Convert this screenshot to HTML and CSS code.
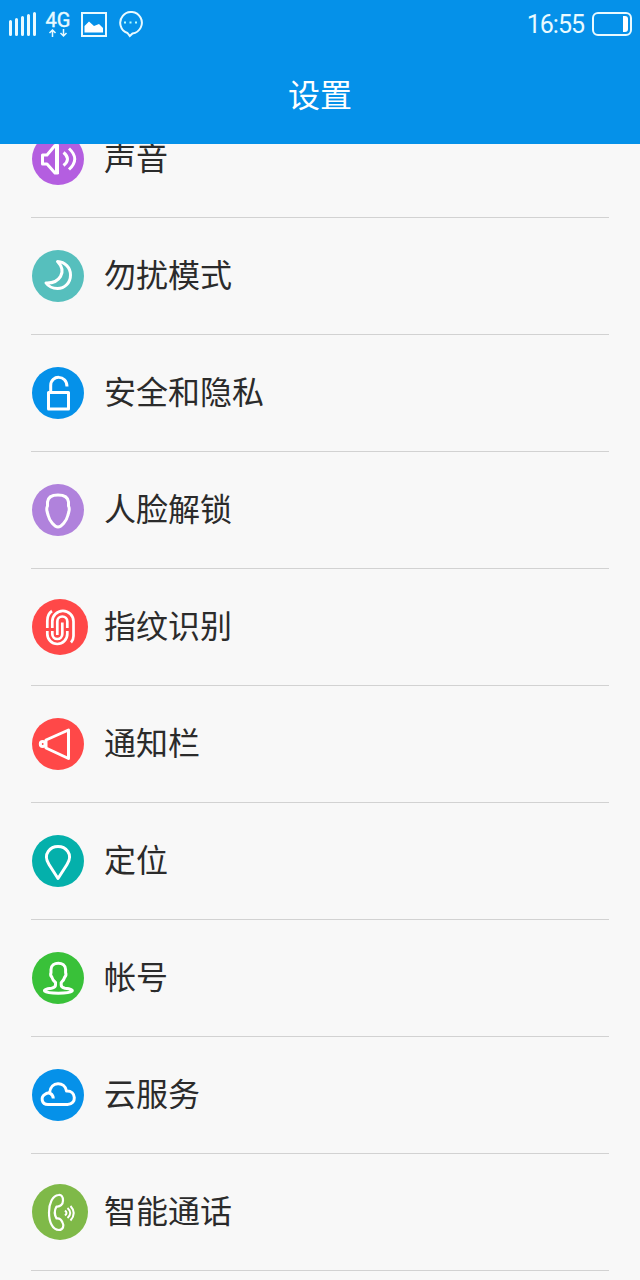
FILE: index.html
```
<!DOCTYPE html>
<html lang="zh-CN">
<head>
<meta charset="utf-8">
<title>设置</title>
<link rel="stylesheet" href="styles.css">
</head>
<body>
<div class="screen">
<header class="header">
  <div class="status">
    <svg class="signal" width="28" height="26" viewBox="0 0 28 26"><path d="M1.500 10.500V23.500M7.500 8.500V23.500M13.500 6.500V23.500M19.500 4.500V23.500M25.500 2.500V23.500"/></svg>
    <div class="network"><span>4G</span><svg width="20" height="9" viewBox="0 0 20 9"><path d="M4.500 8V1M1.500 4L4.500 1L7.500 4M15.500 0V7M12.500 4L15.500 7L18.500 4"/></svg></div>
    <svg class="photo" width="26" height="25" viewBox="0 0 26 25"><rect x="1" y="1" width="24" height="23"/><path d="M3.500 20.500V14L8 9.500L13 14L18 12L22 16V20.500Z"/></svg>
    <svg class="chat" width="24" height="27" viewBox="0 0 24 27"><path d="M8.500 22A10.800 10.800 0 1 1 13.500 22.500L10.800 25Z"/><path class="dots" d="M5 11.500H7M10.500 11.500H12.500M16 11.500H18"/></svg>
    <span class="time">16:55</span>
    <svg class="battery" width="40" height="24" viewBox="0 0 40 24"><rect x="1" y="1" width="38" height="22" rx="5"/><path d="M31 4H33Q36 4 36 7V17Q36 20 33 20H31Z"/></svg>
  </div>
  <h1 class="title">设置</h1>
</header>
<main class="viewport">
<ul class="list">
  <li class="row"><svg class="icon purple" viewBox="0 0 52 52"><path d="M10.500 22H15L23 12.500H25.500V40H23L15 31H10.500Z"/><path d="M25 11.500V41" stroke-width="4"/><path d="M31.500 19.500Q39.500 26 31.500 32.500M37 15.500Q48.500 26 37 36.500"/></svg><span class="label">声音</span></li>
  <li class="row"><svg class="icon teal" viewBox="0 0 52 52"><path d="M25.500 11.500C33 12 38.500 17.500 38.500 25C38.500 33 32.500 38.500 25.500 38.500C20.500 38.500 16.500 36.500 14 33C27.500 33.500 35.500 22 25.500 11.500Z"/></svg><span class="label">勿扰模式</span></li>
  <li class="row"><svg class="icon blue" viewBox="0 0 52 52"><path d="M16.500 25.500H36.500V42H16.500ZM18.700 25V18.500C18.700 7.500 35 7.500 35 19.500"/></svg><span class="label">安全和隐私</span></li>
  <li class="row"><svg class="icon lilac" viewBox="0 0 52 52"><path d="M26 11C31.500 11 36 13 36.500 18L36.500 22Q37.800 24 36.800 28L35.800 31.500C34.500 37 29.500 43 26 43S17.500 37 16.200 31.500L15.200 28Q14.200 24 15.500 22L15.500 18C16 13 20.500 11 26 11Z"/></svg><span class="label">人脸解锁</span></li>
  <li class="row"><svg class="icon wide red" viewBox="0 0 56 56"><path d="M20 12Q15.300 15 15.300 22V29M15.300 32V35A10 10 0 0 0 35.300 35V32M20.300 29V22.500A10.600 10.600 0 0 1 41.500 22.500V37Q41.500 41 39 43.500M20.300 32V35A5 5 0 0 0 30.300 35V23.500M25.300 36V22.500A5 5 0 0 1 35.300 22.500V29"/></svg><span class="label">指纹识别</span></li>
  <li class="row"><svg class="icon red" viewBox="0 0 52 52"><path d="M14 22L36.500 12V40.500L14 30Z"/><circle cx="10.700" cy="26" r="2.400"/></svg><span class="label">通知栏</span></li>
  <li class="row"><svg class="icon jade" viewBox="0 0 52 52"><path d="M26 43.500L17 29.500C10 18.500 19 11.500 26 11.500S42 18.500 35 29.500Z"/></svg><span class="label">定位</span></li>
  <li class="row"><svg class="icon green" viewBox="0 0 52 52"><path d="M23.500 33V30.500Q20.500 28 19.800 25Q18 23.500 19 20.500V17.500C19 9 33.600 9 33.600 17.500V20.500Q34.600 23.500 32.800 25Q32 28 29.200 30.500V33Q29.200 35.500 33 36.200C45 37.500 42 41.200 26.300 41.200S8 37.500 19.500 36.200Q23.500 35.500 23.500 33Z"/></svg><span class="label">帐号</span></li>
  <li class="row"><svg class="icon blue" viewBox="0 0 52 52"><path d="M21.300 29.500C21 25 17 22.500 13.500 25C8 28 9.500 35.500 16 35.500H35.500C45 35.500 44.500 21.500 34.500 22C33 12 18.500 12 17.700 23.500"/></svg><span class="label">云服务</span></li>
  <li class="row"><svg class="icon wide olive" viewBox="0 0 56 56"><path d="M26.500 11C20.500 11.500 17 19.500 17 28.500C17 38 20.500 46 27 46C31 46 32.500 42 30.500 38.500C29.500 36 28 34 24.500 34.500C22.500 31 22.500 26 24.500 22.500C28 23 31 20.500 31 16.500C31 12.500 29.500 10.500 26.500 11Z" stroke-width="2.200"/><path d="M33 26.500Q36 29 33 31.500M35.500 24Q41 29 35.500 34M38.500 22Q45 29 38.500 36.500" stroke-width="2"/></svg><span class="label">智能通话</span></li>
</ul>
</main>
</div>
</body>
</html>
```
FILE: styles.css
```
* { box-sizing: border-box; }
body {
  margin: 0;
  background: #f8f8f8;
  font-family: "Noto Sans CJK SC", sans-serif;
}
.screen {
  width: 640px;
  height: 1280px;
  display: flex;
  flex-direction: column;
  overflow: hidden;
}
.header {
  height: 144px;
  flex: none;
  background: #0591e9;
  color: #fff;
}
.status {
  height: 48px;
  display: flex;
  align-items: center;
  padding: 0 8px 0 9px;
}
.status svg { fill: none; stroke: #e9faff; stroke-width: 2; }
.status .signal { stroke-width: 3; stroke-linecap: round; }
.network {
  width: 24px;
  margin-left: 9px;
  display: flex;
  flex-direction: column;
  align-items: center;
  font: 400 20px/18px Roboto, sans-serif;
  color: #e9faff;
  -webkit-text-stroke: 0.4px #e9faff;
}
.status .network svg { stroke-width: 1.5; }
.photo { margin-left: 11px; }
.photo path { fill: #fff; stroke: none; }
.chat { margin-left: 12px; }
.status .dots { stroke: #b5ffff; }
.time {
  margin-left: auto;
  margin-right: 8px;
  padding-top: 1px;
  font: 25px/30px Roboto, sans-serif;
  letter-spacing: -1px;
  color: #e9faff;
}
.battery path { fill: #fff; stroke: none; }
.title {
  margin: 0;
  height: 96px;
  line-height: 91px;
  font-size: 32px;
  font-weight: 400;
  text-align: center;
}
.viewport {
  flex: 1;
  min-height: 0;
  overflow: hidden;
}
.list {
  list-style: none;
  margin: -43px 31px 0;
  padding: 0;
}
.row {
  height: 117px;
  display: flex;
  align-items: center;
  padding-left: 1px;
  border-bottom: 1px solid #d2d2d2;
}
.icon {
  width: 52px;
  height: 52px;
  margin-right: 20px;
  border-radius: 50%;
  fill: none;
  stroke: #fff;
  stroke-width: 3;
  stroke-linejoin: round;
}
.wide {
  width: 56px;
  height: 56px;
  margin-right: 16px;
  stroke-width: 2.7;
}
.label {
  padding-bottom: 6px;
  font-size: 32px;
  line-height: 48px;
  color: #2b2b2b;
}
.purple { background: #b45ee0; }
.teal { background: #56bfbd; }
.blue { background: #0591e9; }
.lilac { background: #b082dc; }
.red { background: #ff4848; }
.jade { background: #04b0ab; }
.green { background: #39c139; }
.olive { background: #7fb948; }
```
